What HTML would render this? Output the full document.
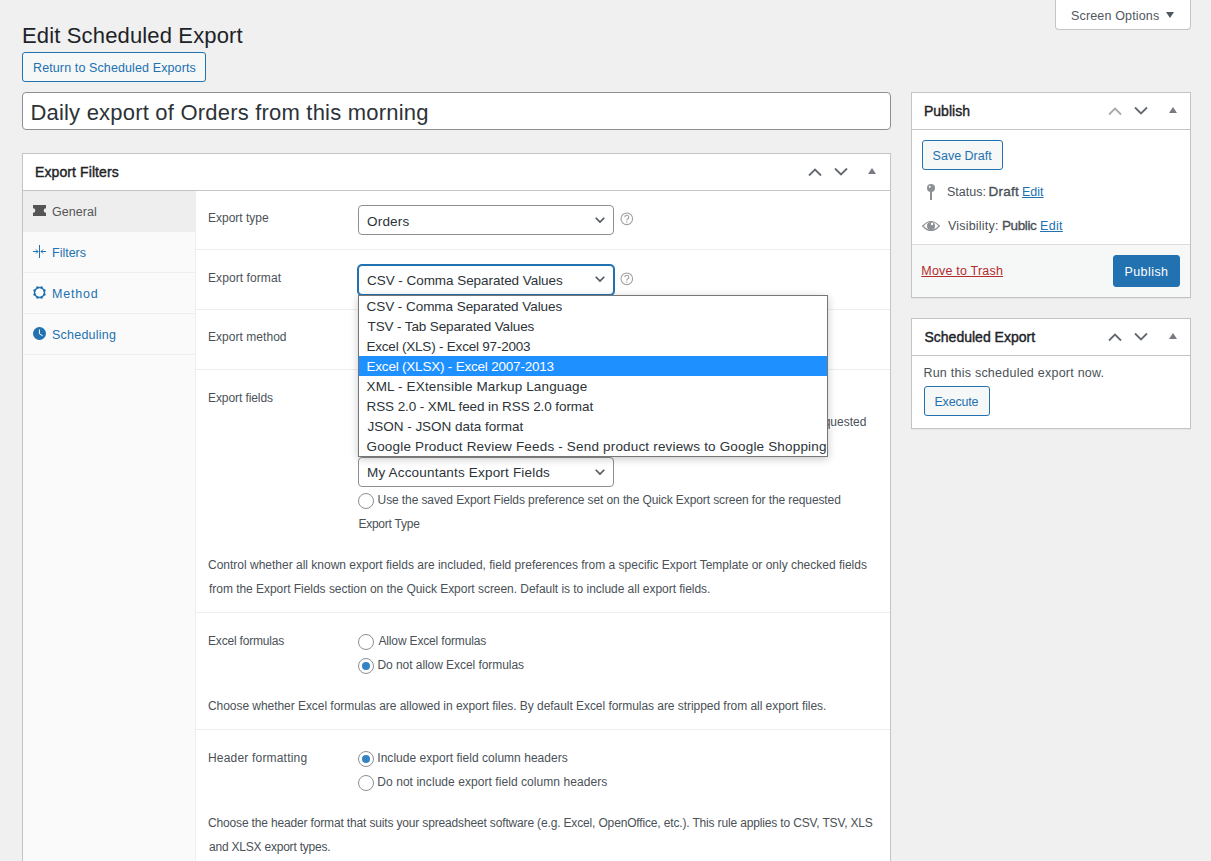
<!DOCTYPE html>
<html><head><meta charset="utf-8">
<style>
*{box-sizing:border-box}
html,body{margin:0;padding:0}
body{background:#f0f0f1;color:#3c434a;font-family:"Liberation Sans",sans-serif;font-size:13px;width:1211px;height:861px;overflow:hidden;position:relative}
.a{position:absolute}
.tx{position:absolute;line-height:1;white-space:nowrap}
.btn{position:absolute;border:1px solid #2271b1;border-radius:3px;background:#f6f7f7}
.pb{position:absolute;background:#fff;border:1px solid #c3c4c7;box-shadow:0 1px 1px rgba(0,0,0,.04)}
.sep{position:absolute;left:196px;width:694px;height:1px;background:#eee}
.tsep{position:absolute;left:23px;width:172px;height:1px;background:#eee}
.sel{position:absolute;left:358px;width:256px;height:30px;border:1px solid #8c8f94;border-radius:4px;background:#fff}
.rad{position:absolute;left:358px;width:16px;height:16px;border:1px solid #8c8f94;border-radius:50%;background:#fff}
.rad.on::after{content:"";position:absolute;left:3px;top:3px;width:8px;height:8px;border-radius:50%;background:#3582c4}
svg{position:absolute;overflow:visible}
</style></head><body>

<!-- Screen options -->
<div class="a" style="left:1055px;top:-1px;width:136px;height:31px;background:#fff;border:1px solid #c3c4c7;border-top:none;border-radius:0 0 4px 4px"></div>
<svg style="left:1166px;top:12px" width="8" height="6"><path d="M0 0H8L4 6Z" fill="#50575e"/></svg>

<!-- heading / button -->
<div class="btn" style="left:22px;top:52px;width:184px;height:30px"></div>

<!-- title input -->
<div class="a" style="left:22px;top:92px;width:869px;height:38px;background:#fff;border:1px solid #8c8f94;border-radius:4px"></div>

<!-- Export Filters postbox -->
<div class="pb" style="left:22px;top:153px;width:869px;height:760px"></div>
<div class="a" style="left:23px;top:190px;width:867px;height:1px;background:#c3c4c7"></div>
<div class="a" style="left:23px;top:191px;width:173px;height:700px;background:#fafafa;border-right:1px solid #eee"></div>
<div class="a" style="left:23px;top:191px;width:172px;height:41px;background:#eee"></div>
<div class="tsep" style="top:272px"></div>
<div class="tsep" style="top:313px"></div>
<div class="tsep" style="top:354px"></div>
<div class="sep" style="top:249px"></div>
<div class="sep" style="top:309px"></div>
<div class="sep" style="top:369px"></div>
<div class="sep" style="top:612px"></div>
<div class="sep" style="top:729px"></div>

<!-- handle icons: Export Filters -->
<svg style="left:808px;top:168px" width="14" height="8"><path d="M1 7.5L7 1.5L13 7.5" fill="none" stroke="#646970" stroke-width="1.8"/></svg>
<svg style="left:834px;top:168px" width="14" height="8"><path d="M1 0.5L7 6.5L13 0.5" fill="none" stroke="#646970" stroke-width="1.8"/></svg>
<svg style="left:868px;top:168px" width="8" height="6"><path d="M0 6H8L4 0Z" fill="#787c82"/></svg>

<!-- tab icons -->
<svg style="left:33px;top:205px" width="13" height="11"><path d="M0 0H13V3.2A2.3 2.3 0 0 0 13 7.8V11H0V7.8A2.3 2.3 0 0 0 0 3.2Z" fill="#555"/></svg>
<svg style="left:33px;top:245px" width="13" height="13"><path d="M6.5 0V13M0 6.5H5M3 4.5L5 6.5L3 8.5M13 6.5H8M10 4.5L8 6.5L10 8.5" fill="none" stroke="#2271b1" stroke-width="1"/></svg>
<svg style="left:33px;top:286px" width="13" height="13"><circle cx="6.5" cy="6.5" r="5" fill="none" stroke="#2271b1" stroke-width="1.4"/><g fill="#2271b1"><circle cx="11.40" cy="8.53" r="1.25"/><circle cx="8.53" cy="11.40" r="1.25"/><circle cx="4.47" cy="11.40" r="1.25"/><circle cx="1.60" cy="8.53" r="1.25"/><circle cx="1.60" cy="4.47" r="1.25"/><circle cx="4.47" cy="1.60" r="1.25"/><circle cx="8.53" cy="1.60" r="1.25"/><circle cx="11.40" cy="4.47" r="1.25"/></g></svg>
<svg style="left:33px;top:327px" width="13" height="13"><circle cx="6.5" cy="6.5" r="6.5" fill="#2271b1"/><path d="M6.4 2.5V6.8L9.7 8.8" fill="none" stroke="#fff" stroke-width="1"/></svg>

<!-- selects -->
<div class="sel" style="top:205px"></div>
<svg style="left:595px;top:217px" width="10" height="6"><path d="M0.7 0.7L5 5L9.3 0.7" fill="none" stroke="#50575e" stroke-width="1.6"/></svg>
<svg style="left:620px;top:212px" width="14" height="14"><circle cx="6.8" cy="6.8" r="5.8" fill="none" stroke="#a0a0a0" stroke-width="1.1"/><path d="M4.8 5.3A2 2 0 1 1 7.4 7.1Q6.8 7.5 6.8 8.4" fill="none" stroke="#a0a0a0" stroke-width="1.1"/><circle cx="6.8" cy="10" r="0.7" fill="#a0a0a0"/></svg>

<div class="sel" style="top:265px;height:30px;border-color:#2271b1;box-shadow:0 0 0 1px #2271b1"></div>
<svg style="left:595px;top:276px" width="10" height="6"><path d="M0.7 0.7L5 5L9.3 0.7" fill="none" stroke="#50575e" stroke-width="1.6"/></svg>
<svg style="left:620px;top:272px" width="14" height="14"><circle cx="6.8" cy="6.8" r="5.8" fill="none" stroke="#a0a0a0" stroke-width="1.1"/><path d="M4.8 5.3A2 2 0 1 1 7.4 7.1Q6.8 7.5 6.8 8.4" fill="none" stroke="#a0a0a0" stroke-width="1.1"/><circle cx="6.8" cy="10" r="0.7" fill="#a0a0a0"/></svg>

<div class="sel" style="top:457px"></div>
<svg style="left:595px;top:469px" width="10" height="6"><path d="M0.7 0.7L5 5L9.3 0.7" fill="none" stroke="#50575e" stroke-width="1.6"/></svg>

<!-- radios -->
<div class="rad" style="top:493px"></div>
<div class="rad" style="top:634px"></div>
<div class="rad on" style="top:658px"></div>
<div class="rad on" style="top:751px"></div>
<div class="rad" style="top:775px"></div>

<!-- Publish postbox -->
<div class="pb" style="left:911px;top:92px;width:280px;height:206px"></div>
<div class="a" style="left:912px;top:129px;width:278px;height:1px;background:#c3c4c7"></div>
<svg style="left:1108px;top:107px" width="14" height="8"><path d="M1 7.5L7 1.5L13 7.5" fill="none" stroke="#a7aaad" stroke-width="1.8"/></svg>
<svg style="left:1134px;top:107px" width="14" height="8"><path d="M1 0.5L7 6.5L13 0.5" fill="none" stroke="#646970" stroke-width="1.8"/></svg>
<svg style="left:1169px;top:107px" width="8" height="6"><path d="M0 6H8L4 0Z" fill="#787c82"/></svg>
<div class="btn" style="left:922px;top:140px;width:81px;height:30px"></div>
<svg style="left:926px;top:184px" width="10" height="16"><circle cx="5" cy="4" r="4" fill="#8c8f94"/><circle cx="3.8" cy="2.8" r="1" fill="#fff"/><rect x="4" y="7" width="2" height="9" fill="#8c8f94"/></svg>
<svg style="left:922px;top:220px" width="18" height="12"><path d="M0.7 6Q9 -3 17.3 6Q9 15 0.7 6Z" fill="none" stroke="#8c8f94" stroke-width="1.2"/><circle cx="9" cy="6" r="4" fill="#8c8f94"/><circle cx="10" cy="4" r="1.2" fill="#fff"/></svg>
<div class="a" style="left:912px;top:244px;width:278px;height:53px;background:#f6f7f7;border-top:1px solid #dcdcde"></div>
<div class="a" style="left:1113px;top:255px;width:67px;height:32px;background:#2271b1;border:1px solid #2271b1;border-radius:3px"></div>

<!-- Scheduled Export postbox -->
<div class="pb" style="left:911px;top:318px;width:280px;height:111px"></div>
<div class="a" style="left:912px;top:355px;width:278px;height:1px;background:#c3c4c7"></div>
<svg style="left:1108px;top:333px" width="14" height="8"><path d="M1 7.5L7 1.5L13 7.5" fill="none" stroke="#646970" stroke-width="1.8"/></svg>
<svg style="left:1134px;top:333px" width="14" height="8"><path d="M1 0.5L7 6.5L13 0.5" fill="none" stroke="#646970" stroke-width="1.8"/></svg>
<svg style="left:1169px;top:333px" width="8" height="6"><path d="M0 6H8L4 0Z" fill="#787c82"/></svg>
<div class="btn" style="left:924px;top:386px;width:66px;height:30px"></div>

<div class="tx" style="left:1071px;top:10px;font-size:12.5px;font-weight:400;color:#50575e;letter-spacing:0.154px;">Screen Options</div>
<div class="tx" style="left:22px;top:25px;font-size:22px;font-weight:400;color:#1d2327;letter-spacing:0.15px;">Edit Scheduled Export</div>
<div class="tx" style="left:33px;top:62px;font-size:12.5px;font-weight:400;color:#2271b1;letter-spacing:0.115px;">Return to Scheduled Exports</div>
<div class="tx" style="left:30.4px;top:102px;font-size:22px;font-weight:400;color:#2c3338;letter-spacing:0.205px;">Daily export of Orders from this morning</div>
<div class="tx" style="left:35px;top:165px;font-size:14px;font-weight:400;color:#1d2327;letter-spacing:0.1px;-webkit-text-stroke:0.4px #1d2327">Export Filters</div>
<div class="tx" style="left:924px;top:104px;font-size:14px;font-weight:400;color:#1d2327;letter-spacing:0.0px;-webkit-text-stroke:0.4px #1d2327">Publish</div>
<div class="tx" style="left:924.5px;top:330px;font-size:14px;font-weight:400;color:#1d2327;letter-spacing:0.0px;-webkit-text-stroke:0.4px #1d2327">Scheduled Export</div>
<div class="tx" style="left:52px;top:206px;font-size:12.5px;font-weight:400;color:#555;letter-spacing:0.067px;">General</div>
<div class="tx" style="left:52px;top:247px;font-size:12.5px;font-weight:400;color:#2271b1;letter-spacing:0.0px;">Filters</div>
<div class="tx" style="left:52px;top:288px;font-size:12.5px;font-weight:400;color:#2271b1;letter-spacing:0.8px;">Method</div>
<div class="tx" style="left:52px;top:329px;font-size:12.5px;font-weight:400;color:#2271b1;letter-spacing:0.222px;">Scheduling</div>
<div class="tx" style="left:208px;top:212px;font-size:12px;font-weight:400;color:#4a5157;letter-spacing:0.0px;">Export type</div>
<div class="tx" style="left:208px;top:272px;font-size:12px;font-weight:400;color:#4a5157;letter-spacing:0.083px;">Export format</div>
<div class="tx" style="left:208px;top:331px;font-size:12px;font-weight:400;color:#4a5157;letter-spacing:0.042px;">Export method</div>
<div class="tx" style="left:208px;top:392px;font-size:12px;font-weight:400;color:#4a5157;letter-spacing:-0.083px;">Export fields</div>
<div class="tx" style="left:208px;top:635px;font-size:12px;font-weight:400;color:#4a5157;letter-spacing:-0.185px;">Excel formulas</div>
<div class="tx" style="left:208px;top:752px;font-size:12px;font-weight:400;color:#4a5157;letter-spacing:0.188px;">Header formatting</div>
<div class="tx" style="left:367px;top:215px;font-size:13.5px;font-weight:400;color:#2c3338;letter-spacing:0.2px;">Orders</div>
<div class="tx" style="left:367px;top:274px;font-size:13.5px;font-weight:400;color:#2c3338;letter-spacing:-0.048px;">CSV - Comma Separated Values</div>
<div class="tx" style="left:367px;top:466px;font-size:13.5px;font-weight:400;color:#2c3338;letter-spacing:0.185px;">My Accountants Export Fields</div>
<div class="tx" style="left:813px;top:416px;font-size:12px;font-weight:400;color:#4a5157;letter-spacing:0px;">requested</div>
<div class="tx" style="left:377.6px;top:494px;font-size:12px;font-weight:400;color:#4a5157;letter-spacing:-0.105px;">Use the saved Export Fields preference set on the Quick Export screen for the requested</div>
<div class="tx" style="left:358.4px;top:518px;font-size:12px;font-weight:400;color:#4a5157;letter-spacing:-0.24px;">Export Type</div>
<div class="tx" style="left:378.5px;top:635px;font-size:12px;font-weight:400;color:#4a5157;letter-spacing:-0.158px;">Allow Excel formulas</div>
<div class="tx" style="left:377.5px;top:659px;font-size:12px;font-weight:400;color:#4a5157;letter-spacing:-0.058px;">Do not allow Excel formulas</div>
<div class="tx" style="left:377.3px;top:752px;font-size:12px;font-weight:400;color:#4a5157;letter-spacing:0.029px;">Include export field column headers</div>
<div class="tx" style="left:377.3px;top:776px;font-size:12px;font-weight:400;color:#4a5157;letter-spacing:0.059px;">Do not include export field column headers</div>
<div class="tx" style="left:208px;top:559px;font-size:12px;font-weight:400;color:#4a5157;letter-spacing:-0.004px;">Control whether all known export fields are included, field preferences from a specific Export Template or only checked fields</div>
<div class="tx" style="left:209px;top:583px;font-size:12px;font-weight:400;color:#4a5157;letter-spacing:-0.036px;">from the Export Fields section on the Quick Export screen. Default is to include all export fields.</div>
<div class="tx" style="left:208px;top:700px;font-size:12px;font-weight:400;color:#4a5157;letter-spacing:-0.05px;">Choose whether Excel formulas are allowed in export files. By default Excel formulas are stripped from all export files.</div>
<div class="tx" style="left:208px;top:817px;font-size:12px;font-weight:400;color:#4a5157;letter-spacing:-0.157px;">Choose the header format that suits your spreadsheet software (e.g. Excel, OpenOffice, etc.). This rule applies to CSV, TSV, XLS</div>
<div class="tx" style="left:209px;top:841px;font-size:12px;font-weight:400;color:#4a5157;letter-spacing:-0.214px;">and XLSX export types.</div>
<div class="tx" style="left:947px;top:186px;font-size:12.5px;font-weight:400;color:#4a5157;letter-spacing:0.0px;">Status:</div>
<div class="tx" style="left:988.6px;top:185px;font-size:13.5px;font-weight:400;color:#4a5157;letter-spacing:0.25px;-webkit-text-stroke:0.35px #4a5157">Draft</div>
<div class="tx" style="left:1022px;top:186px;font-size:12.5px;font-weight:400;color:#2271b1;letter-spacing:0.0px;text-decoration:underline">Edit</div>
<div class="tx" style="left:948px;top:220px;font-size:12.5px;font-weight:400;color:#4a5157;letter-spacing:0.2px;">Visibility:</div>
<div class="tx" style="left:1002px;top:219px;font-size:13.5px;font-weight:400;color:#4a5157;letter-spacing:-0.4px;-webkit-text-stroke:0.35px #4a5157">Public</div>
<div class="tx" style="left:1040px;top:220px;font-size:12.5px;font-weight:400;color:#2271b1;letter-spacing:0.333px;text-decoration:underline">Edit</div>
<div class="tx" style="left:932.6px;top:150px;font-size:12.5px;font-weight:400;color:#2271b1;letter-spacing:0.0px;">Save Draft</div>
<div class="tx" style="left:921.3px;top:265px;font-size:12.5px;font-weight:400;color:#b32d2e;letter-spacing:0.2px;text-decoration:underline">Move to Trash</div>
<div class="tx" style="left:1124.5px;top:266px;font-size:12.5px;font-weight:400;color:#fff;letter-spacing:0.417px;">Publish</div>
<div class="tx" style="left:923.4px;top:367px;font-size:12.5px;font-weight:400;color:#4a5157;letter-spacing:0.241px;">Run this scheduled export now.</div>
<div class="tx" style="left:934.4px;top:396px;font-size:12.5px;font-weight:400;color:#2271b1;letter-spacing:-0.167px;">Execute</div>

<!-- dropdown -->
<div class="a" style="left:358px;top:295px;width:470px;height:162px;background:#fff;border:1px solid #767676;box-shadow:0 2px 8px rgba(0,0,0,.22)"></div>
<div class="a" style="left:359px;top:356px;width:468px;height:20px;background:#1e90ff"></div>
<div class="tx" style="left:366.5px;top:300px;font-size:13.5px;font-weight:400;color:#2c3338;letter-spacing:-0.048px;">CSV - Comma Separated Values</div>
<div class="tx" style="left:367.5px;top:320px;font-size:13.5px;font-weight:400;color:#2c3338;letter-spacing:-0.12px;">TSV - Tab Separated Values</div>
<div class="tx" style="left:366.5px;top:340px;font-size:13.5px;font-weight:400;color:#2c3338;letter-spacing:-0.212px;">Excel (XLS) - Excel 97-2003</div>
<div class="tx" style="left:366.5px;top:360px;font-size:13.5px;font-weight:400;color:#fff;letter-spacing:-0.207px;">Excel (XLSX) - Excel 2007-2013</div>
<div class="tx" style="left:366.5px;top:380px;font-size:13.5px;font-weight:400;color:#2c3338;letter-spacing:0.142px;">XML - EXtensible Markup Language</div>
<div class="tx" style="left:366.5px;top:400px;font-size:13.5px;font-weight:400;color:#2c3338;letter-spacing:-0.091px;">RSS 2.0 - XML feed in RSS 2.0 format</div>
<div class="tx" style="left:367.5px;top:420px;font-size:13.5px;font-weight:400;color:#2c3338;letter-spacing:-0.018px;">JSON - JSON data format</div>
<div class="tx" style="left:366.5px;top:440px;font-size:13.5px;font-weight:400;color:#2c3338;letter-spacing:0.176px;">Google Product Review Feeds - Send product reviews to Google Shopping</div>

</body></html>
